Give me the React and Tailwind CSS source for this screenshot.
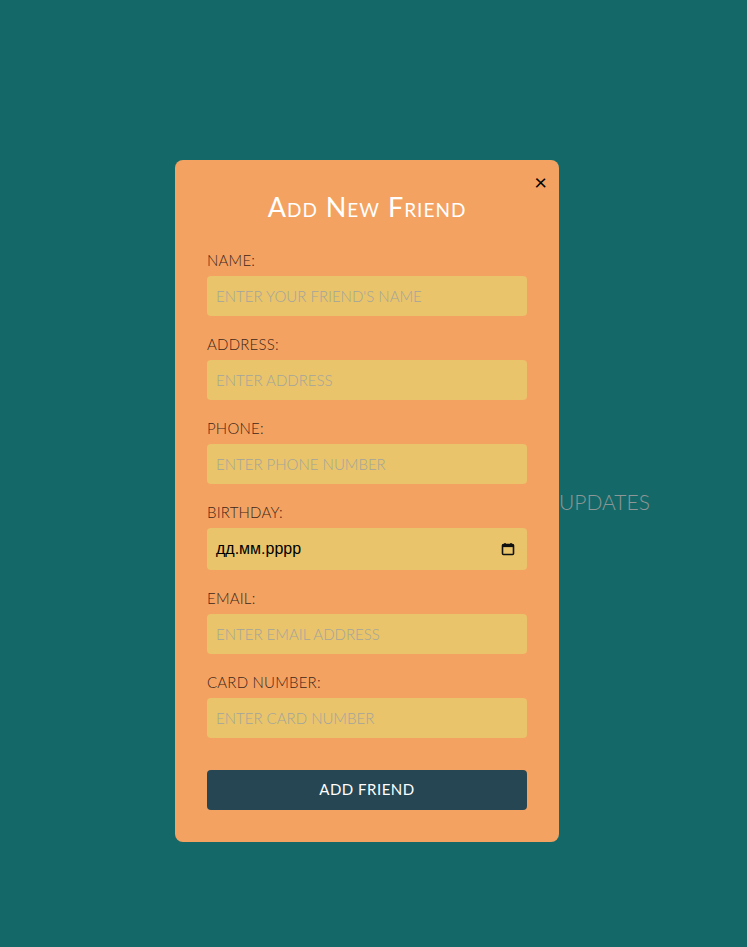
import { useState } from 'react'

const fields = [
  { id: 'name', label: 'Name:', placeholder: "Enter your friend's name" },
  { id: 'address', label: 'Address:', placeholder: 'Enter address' },
  { id: 'phone', label: 'Phone:', placeholder: 'Enter phone number' },
  { id: 'birthday', label: 'Birthday:', date: true },
  { id: 'email', label: 'Email:', placeholder: 'Enter email address' },
  { id: 'card', label: 'Card Number:', placeholder: 'Enter card number' },
]

function CalendarIcon() {
  return (
    <svg width="14" height="14" viewBox="0 0 14 14" fill="none">
      <rect x="1.5" y="2.5" width="11" height="10" rx="1" stroke="#111" strokeWidth="1.6" />
      <rect x="1.5" y="2.5" width="11" height="2.6" fill="#111" />
      <path d="M4 1v2M10 1v2" stroke="#111" strokeWidth="1.4" />
    </svg>
  )
}

export default function App() {
  const [open, setOpen] = useState(true)

  return (
    <div
      className="relative min-h-[947px] w-full bg-[#146968]"
      style={{ fontFamily: 'Lato, "Open Sans", sans-serif' }}
    >
      {/* page content behind the modal, mostly covered */}
      <div className="pl-[559px] pt-[486px]">
        <p className="text-[21px] font-light uppercase text-[#8e9696]">Updates</p>
      </div>

      {open && (
        <div className="absolute inset-0 flex items-start justify-center pr-[13px] pt-[160px]">
          <div className="relative w-[384px] rounded-lg bg-[#f4a261] px-8 pb-8 pt-[27px]">
            <button
              onClick={() => setOpen(false)}
              className="absolute right-[12px] top-[11px] text-[22px] leading-none text-black"
            >
              ×
            </button>

            <h2 className="text-center text-[27px] font-normal text-white [font-variant:small-caps] tracking-[1px]">
              Add New Friend
            </h2>

            <form className="mt-[22px]">
              {fields.map((f) => (
                <div key={f.id} className="mb-[18px]">
                  <label
                    htmlFor={f.id}
                    className="mb-[6px] block text-[15px] font-light uppercase leading-[20px] text-[#3d271a] tracking-[0.2px]"
                  >
                    {f.label}
                  </label>
                  {f.date ? (
                    <div className="flex h-[42px] items-center justify-between rounded bg-[#e9c46a] pl-[9px] pr-[12px]">
                      <span
                        className="text-[16px] text-black"
                        style={{ fontFamily: '"Liberation Sans", Arial, sans-serif' }}
                      >
                        дд.мм.рррр
                      </span>
                      <CalendarIcon />
                    </div>
                  ) : (
                    <input
                      id={f.id}
                      placeholder={f.placeholder}
                      className="block h-10 w-full rounded bg-[#e9c46a] px-[9px] text-[15px] font-light uppercase text-black outline-none placeholder:text-[#a2a49e]"
                    />
                  )}
                </div>
              ))}

              <button
                type="button"
                className="mt-[32px] block h-10 w-full rounded bg-[#264653] text-[15px] uppercase text-white tracking-[0.5px]"
              >
                Add Friend
              </button>
            </form>
          </div>
        </div>
      )}
    </div>
  )
}
